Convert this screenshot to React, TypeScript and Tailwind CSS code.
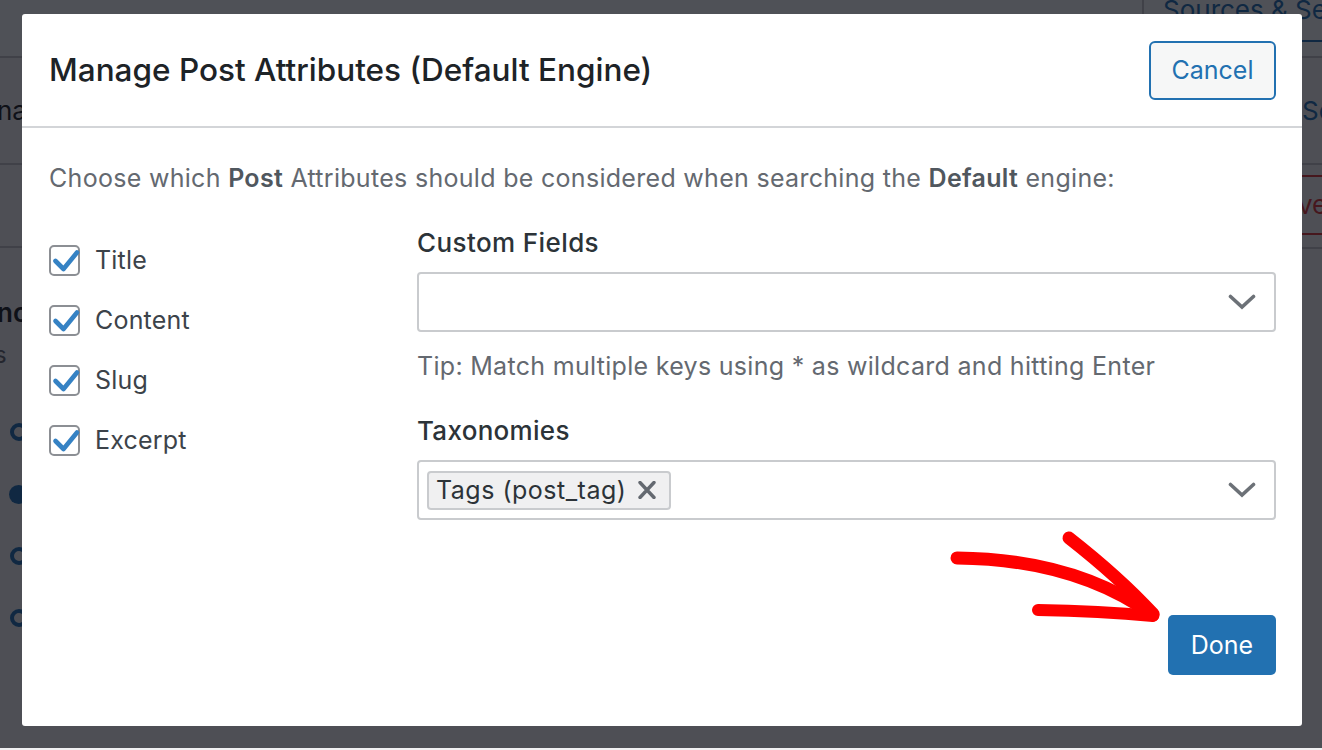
import React from "react";

function CheckBox({ label }: { label: string }) {
  return (
    <div className="flex h-[60px] items-center gap-[15px]">
      <span className="relative flex h-[31px] w-[31px] shrink-0 rounded-[5px] border-2 border-[#8c8f94] bg-white">
        <svg
          className="absolute left-0 top-0 overflow-visible"
          width="27"
          height="27"
          viewBox="0 0 27 27"
        >
          <path
            d="M4.5 14 L12.5 22 L26 5.5"
            fill="none"
            stroke="#3582c4"
            strokeWidth="4.6"
            strokeLinecap="round"
            strokeLinejoin="round"
          />
        </svg>
      </span>
      <span className="text-[25px] leading-[30px] tracking-[0.2px] text-[#3c434a]">{label}</span>
    </div>
  );
}

function Chevron() {
  return (
    <svg width="28" height="16" viewBox="0 0 28 16" className="shrink-0">
      <path
        d="M2.5 2.5 L14 13 L25.5 2.5"
        fill="none"
        stroke="#6c7177"
        strokeWidth="3.6"
        strokeLinecap="round"
        strokeLinejoin="miter"
      />
    </svg>
  );
}

function Background() {
  return (
    <div className="flex h-full w-full flex-col bg-[#f0f0f1]">
      <div className="flex h-[58px] shrink-0 border-b-2 border-[#c3c4c7] bg-[#f6f7f7]">
        <div className="ml-auto h-[42px] w-[180px] overflow-hidden border-b-2 border-l-2 border-b-[#2271b1] border-l-[#c3c4c7] pl-[19px]">
          <div className="-mt-[6px] whitespace-nowrap text-[26px] leading-[32px] text-[#2271b1]">
            Sources &amp; Settings
          </div>
        </div>
      </div>
      <div className="flex flex-1">
        <div className="flex w-[22px] shrink-0 flex-col overflow-hidden">
          <div className="flex h-[107px] shrink-0 items-center border-b-2 border-[#c3c4c7]">
            <span className="-ml-[3px] whitespace-nowrap text-[26px] leading-[32px] text-[#1d2327]">na</span>
          </div>
          <div className="h-[83px] shrink-0 border-b-2 border-[#c3c4c7]" />
          <div className="mt-[48px] whitespace-nowrap text-[26px] font-semibold leading-[34px] text-[#1d2327]">
            <span className="-ml-[3px]">nc</span>
          </div>
          <div className="mt-[10px] whitespace-nowrap text-[24px] leading-[30px] text-[#646970]">
            <span className="-ml-[6px]">s</span>
          </div>
          <div className="mt-[31px] flex flex-col">
            <div className="flex h-[62px] items-center">
              <span className="ml-[10px] h-[18px] w-[18px] shrink-0 rounded-full border-[4px] border-[#2271b1]" />
            </div>
            <div className="flex h-[62px] items-center">
              <span className="ml-[9px] h-[19px] w-[19px] shrink-0 rounded-full bg-[#2271b1]" />
            </div>
            <div className="flex h-[62px] items-center">
              <span className="ml-[10px] h-[18px] w-[18px] shrink-0 rounded-full border-[4px] border-[#2271b1]" />
            </div>
            <div className="flex h-[62px] items-center">
              <span className="ml-[10px] h-[18px] w-[18px] shrink-0 rounded-full border-[4px] border-[#2271b1]" />
            </div>
          </div>
        </div>
        <div className="flex-1" />
        <div className="flex w-[20px] shrink-0 flex-col overflow-hidden">
          <div className="flex h-[107px] shrink-0 items-center border-b-2 border-[#c3c4c7]">
            <span className="whitespace-nowrap text-[26px] leading-[32px] text-[#2271b1]">Sc</span>
          </div>
          <div className="mt-[10px] flex h-[60px] shrink-0 items-center border-y-2 border-[#d63638]">
            <span className="-ml-[4px] whitespace-nowrap text-[26px] leading-[32px] text-[#d63638]">ve</span>
          </div>
          <div className="mt-[12px] border-b-2 border-[#c3c4c7]" />
        </div>
      </div>
    </div>
  );
}

export default function App() {
  return (
    <div className="relative h-[750px] w-[1322px] overflow-hidden bg-[#f0f0f1] [font-family:Inter,'Noto_Sans',sans-serif]">
      <Background />
      <div className="absolute inset-x-0 top-0 bottom-[2px] bg-[#080a12]/[0.7]" />

      <div className="absolute left-[22px] top-[14px] flex h-[712px] w-[1280px] flex-col rounded-[3px] bg-white">
        <div className="flex h-[114px] shrink-0 items-center justify-between border-b-2 border-[#d3d5d8] pl-[27px] pr-[26px]">
          <h1 className="text-[31.5px] font-medium leading-[38px] text-[#1d2327]">
            Manage Post Attributes (Default Engine)
          </h1>
          <button className="h-[59px] w-[127px] rounded-[6px] border-2 border-[#2271b1] bg-[#f6f7f7] text-[25px] leading-[30px] text-[#2271b1]">
            Cancel
          </button>
        </div>

        <div className="flex flex-col pl-[27px] pr-[26px] pt-[35px]">
          <p className="whitespace-nowrap text-[25px] leading-[30px] tracking-[0.3px] text-[#646970]">
            Choose which <span className="font-semibold text-[#50575e]">Post</span> Attributes should be
            considered when searching the <span className="font-semibold text-[#50575e]">Default</span>{" "}
            engine:
          </p>

          <div className="mt-[35px] flex">
            <div className="flex w-[368px] shrink-0 flex-col pt-[2px]">
              <CheckBox label="Title" />
              <CheckBox label="Content" />
              <CheckBox label="Slug" />
              <CheckBox label="Excerpt" />
            </div>

            <div className="flex flex-1 flex-col">
              <div className="text-[26px] font-medium leading-[30px] tracking-[0.4px] text-[#2c3338]">Custom Fields</div>
              <div className="mt-[14px] flex h-[60px] items-center justify-end rounded-[4px] border-2 border-[#c9cbce] pr-[18px]">
                <Chevron />
              </div>
              <div className="mt-[19px] whitespace-nowrap text-[25px] leading-[30px] tracking-[0.3px] text-[#646970]">
                Tip: Match multiple keys using * as wildcard and hitting Enter
              </div>
              <div className="mt-[35px] text-[26px] font-medium leading-[30px] tracking-[0.3px] text-[#2c3338]">Taxonomies</div>
              <div className="mt-[14px] flex h-[60px] items-center justify-between rounded-[4px] border-2 border-[#c9cbce] pl-[8px] pr-[18px]">
                <span className="flex h-[39px] items-center gap-[11px] rounded-[4px] border-2 border-[#c9cbce] bg-[#f0f0f1] pl-[7px] pr-[12px]">
                  <span className="whitespace-nowrap text-[25px] leading-[30px] tracking-[0.5px] text-[#2c3338]">Tags (post_tag)</span>
                  <svg width="20" height="18" viewBox="0 0 20 18" className="shrink-0">
                    <path d="M3 1.5 L17 16.5 M17 1.5 L3 16.5" stroke="#646970" strokeWidth="3.4" strokeLinecap="round" />
                  </svg>
                </span>
                <Chevron />
              </div>
            </div>
          </div>

          <div className="mt-[95px] flex justify-end">
            <button className="h-[60px] w-[108px] rounded-[5px] bg-[#2271b1] text-[25px] leading-[30px] text-white">
              Done
            </button>
          </div>
        </div>
      </div>

      <svg
        className="pointer-events-none absolute left-[930px] top-[520px]"
        width="240"
        height="115"
        viewBox="930 520 240 115"
      >
        <path
          d="M957 558 Q1075 559 1153 615"
          fill="none"
          stroke="#ff0000"
          strokeWidth="13"
          strokeLinecap="round"
        />
        <path
          d="M1069 538 Q1120 578 1153 614"
          fill="none"
          stroke="#ff0000"
          strokeWidth="13"
          strokeLinecap="round"
        />
        <path
          d="M1038 610 Q1100 611 1153 616"
          fill="none"
          stroke="#ff0000"
          strokeWidth="12"
          strokeLinecap="round"
        />
      </svg>
    </div>
  );
}
